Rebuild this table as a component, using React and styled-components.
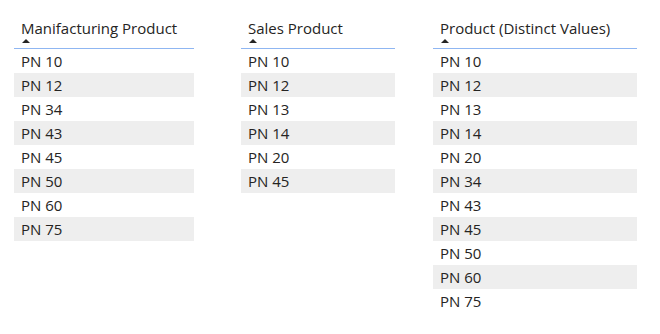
import React from "react";
import styled, { createGlobalStyle } from "styled-components";

const Global = createGlobalStyle`
  body {
    margin: 0;
    background: #ffffff;
    font-family: "Open Sans", "Segoe UI", "Noto Sans", sans-serif;
    color: #252423;
  }
`;

const S = {
  Page: styled.div`
    display: flex;
    align-items: flex-start;
    padding: 18px 0 0 14px;
  `,
  Table: styled.div`
    width: ${props => props.width}px;
    margin-right: ${props => props.gap || 0}px;
  `,
  Header: styled.div`
    padding: 0 7px;
    border-bottom: 1px solid #8fb6f2;
    height: 30px;
  `,
  Title: styled.div`
    font-size: 15px;
    line-height: 20px;
    white-space: nowrap;
  `,
  Arrow: styled.div`
    width: 0;
    height: 0;
    margin: 1px 0 0 1px;
    border-left: 4px solid transparent;
    border-right: 4px solid transparent;
    border-bottom: 4px solid #252423;
  `,
  Row: styled.div`
    height: 24px;
    line-height: 24px;
    padding: 0 7px;
    font-size: 15px;
    background: ${props => (props.striped ? "#eeeeee" : "transparent")};
  `
};

const tables = [
  {
    title: "Manifacturing Product",
    width: 180,
    gap: 47,
    rows: ["PN 10", "PN 12", "PN 34", "PN 43", "PN 45", "PN 50", "PN 60", "PN 75"]
  },
  {
    title: "Sales Product",
    width: 154,
    gap: 38,
    rows: ["PN 10", "PN 12", "PN 13", "PN 14", "PN 20", "PN 45"]
  },
  {
    title: "Product (Distinct Values)",
    width: 204,
    rows: [
      "PN 10",
      "PN 12",
      "PN 13",
      "PN 14",
      "PN 20",
      "PN 34",
      "PN 43",
      "PN 45",
      "PN 50",
      "PN 60",
      "PN 75"
    ]
  }
];

const App = () => (
  <>
    <Global />
    <S.Page>
      {tables.map(t => (
        <S.Table key={t.title} width={t.width} gap={t.gap}>
          <S.Header>
            <S.Title>{t.title}</S.Title>
            <S.Arrow />
          </S.Header>
          {t.rows.map((r, i) => (
            <S.Row key={r} striped={i % 2 === 1}>
              {r}
            </S.Row>
          ))}
        </S.Table>
      ))}
    </S.Page>
  </>
);

export default App;
